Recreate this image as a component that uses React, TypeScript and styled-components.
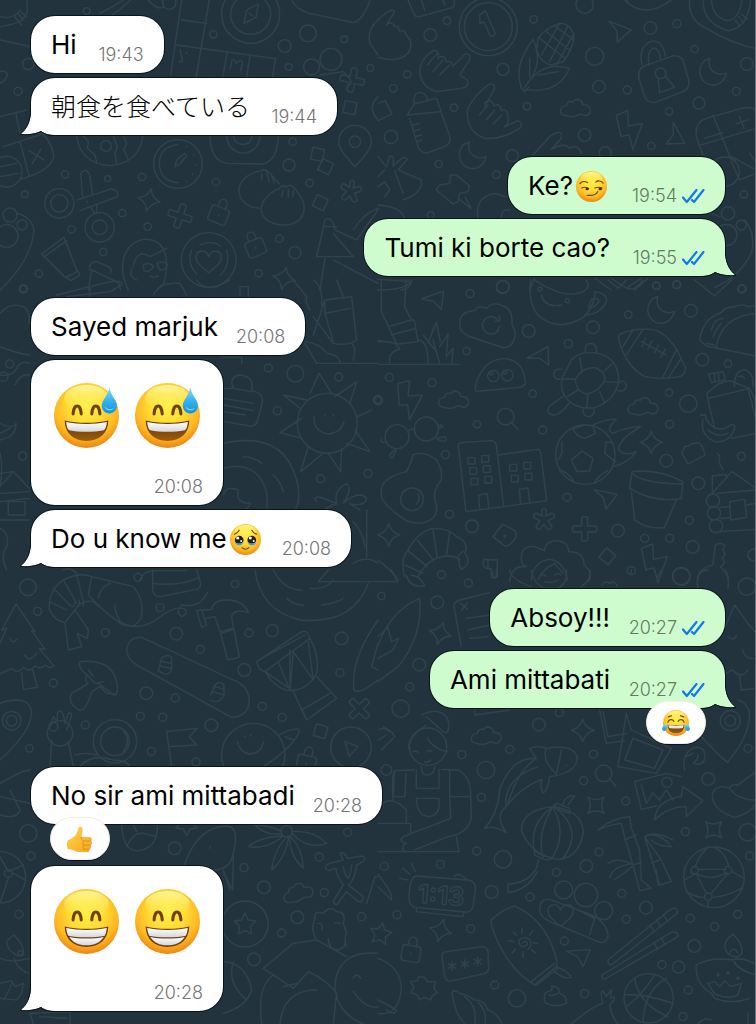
import React from 'react';
import styled, { createGlobalStyle } from 'styled-components';

const INK = '#0a141b';

const GlobalStyle = createGlobalStyle`
  *, *::before, *::after { box-sizing: border-box; }
  body {
    margin: 0;
    background: #22333d;
    color: #000;
    font-family: Inter, "Noto Sans CJK JP", sans-serif;
  }
`;

const Page = styled.main`
  position: relative;
  min-height: 100vh;
  padding: 16px 30px 13px 31px;
  border-right: 1px solid #66757f;
`;

const WallpaperSvg = styled.svg`
  position: absolute;
  inset: 0;
  width: 100%;
  height: 100%;
`;

const Thread = styled.div`
  position: relative;
  display: flex;
  flex-direction: column;
  gap: 22px;
`;

const Group = styled.ol<{ $own?: boolean }>`
  display: flex;
  flex-direction: column;
  align-items: ${(p) => (p.$own ? 'flex-end' : 'flex-start')};
  gap: 5px;
  margin: 0;
  padding: 0;
  list-style: none;
`;

const Bubble = styled.li<{ $own?: boolean; $reacted?: boolean }>`
  position: relative;
  isolation: isolate;
  display: flex;
  align-items: center;
  gap: 18px;
  min-height: 57px;
  padding: 1px 20px 0;
  margin-bottom: ${(p) => (p.$reacted ? 37 : 0)}px;
  border-radius: 24px;
  background: ${(p) => (p.$own ? '#cffccf' : '#fff')};
  box-shadow: 0 0 0 1px ${INK};
`;

const StickerBubble = styled(Bubble)`
  flex-direction: column;
  align-items: flex-end;
  justify-content: space-between;
  height: 145px;
  padding: 23px 20px 7px;
`;

const Text = styled.p`
  display: flex;
  align-items: center;
  margin: 0;
  font-size: 26px;
  line-height: 32px;
  white-space: nowrap;

  &:lang(ja) {
    font-size: 25px;
    font-weight: 300;
  }
`;

const Meta = styled.span`
  display: flex;
  align-items: center;
  gap: 5px;
  align-self: flex-end;
  padding-bottom: 7px;
`;

const StickerMeta = styled(Meta)`
  padding-bottom: 0;
`;

const Stamp = styled.time<{ $own?: boolean }>`
  min-width: 49px;
  font-size: 18px;
  line-height: 22px;
  font-weight: 300;
  text-align: right;
  color: ${(p) => (p.$own ? '#627b62' : '#757575')};
`;

const Stickers = styled.div`
  display: flex;
  gap: 16px;
  padding: 0 3px;
`;

const EmojiSvg = styled.svg<{ $size: number; $inline?: boolean }>`
  display: block;
  flex: none;
  width: ${(p) => p.$size}px;
  height: ${(p) => p.$size}px;
  margin: ${(p) => (p.$inline ? '0 3px' : '0')};
  overflow: visible;
`;

const TailSvg = styled.svg<{ $own?: boolean }>`
  position: absolute;
  z-index: -1;
  bottom: -1px;
  ${(p) => (p.$own ? 'right: -11px; transform: scaleX(-1);' : 'left: -11px;')}
  width: 36px;
  height: 34px;
`;

const Reaction = styled.button<{ $own?: boolean }>`
  position: absolute;
  top: 50px;
  ${(p) => (p.$own ? 'right: 19px;' : 'left: 19px;')}
  display: flex;
  align-items: center;
  justify-content: center;
  width: 60px;
  height: 43px;
  padding: 0;
  border: 1px solid #f1eee9;
  border-radius: 22px;
  background: #fff;
  box-shadow: 0 1px 0 ${INK};
`;

/* ---------- wallpaper ---------- */

const SHAPES = {
  sparkle: 'M0-34Q6-8 34 0Q8 6 0 34Q-6 8-34 0Q-8-6 0-34Z',
  cross: 'M-9-34Q0-40 9-34V-9H34Q40 0 34 9H9V34Q0 40-9 34V9H-34Q-40 0-34-9H-9Z',
  asterisk:
    'M-7-30Q0-38 7-30L5-12L24-20Q34-15 30-6L12 2L24 20Q21 31 11 28L0 13L-12 28Q-22 29-24 20L-12 2L-30-6Q-34-15-25-20L-5-12Z',
  lock: 'M-28-10Q-28-18-20-18H20Q28-18 28-10V22Q28 30 20 30H-20Q-28 30-28 22ZM-12-18V-32A12 12 0 0 1 12-32V-18M0 4V8',
  cloud:
    'M-30 22C-54 22-50-8-28-8C-26-22-14-22-10-18C0-34 22-26 20-10C50-14 50 20 28 22Q10 14 2 22Q-12 28-30 22Z',
  moon: 'M-8-40C-48-32-50 34 0 40C24 40 40 22 42 4C18 16-18-2-8-40Z',
  bolt: 'M-40-42L-6-56L-4-10L38-18L10 60L-2 16L-26 22Z',
  arrow: 'M-34-26L36-12L2 32L-6-2Z',
  square: 'M-18-18H18V18H-18Z',
  heart: 'M0 34C-24 14-38 4-38-12C-38-34-8-38 0-14C8-38 38-34 38-12C38 4 24 14 0 34Z',
  star: 'M0-32L10-12L32-9L16 8L20 30L0 19L-20 30L-16 8L-32-9L-10-12Z',
  lens: 'M25 0A25 25 0 1 1-25 0A25 25 0 1 1 25 0M18 18L36 38',
} as const;

type Mark = [keyof typeof SHAPES, number, number, number?];
type Region = {
  x: number;
  y: number;
  dots: [number, number, number][];
  marks: Mark[];
  lines: string[];
};

const REGIONS: Region[] = [
  {
    x: 0,
    y: 0,
    dots: [
      [260, 33, 10], [508, 8, 20], [640, 103, 11], [924, 100, 25], [854, 138, 19], [1033, 118, 10],
      [866, 201, 10], [935, 201, 24], [993, 178, 33], [1111, 204, 10], [54, 274, 12], [85, 192, 17],
      [195, 523, 11], [323, 536, 9], [426, 531, 11], [648, 546, 11], [867, 495, 18], [878, 425, 11],
      [929, 549, 11], [74, 583, 10], [367, 639, 11], [215, 688, 11], [443, 680, 11], [310, 756, 11],
      [838, 716, 11], [885, 758, 18], [776, 820, 11], [117, 821, 11], [70, 866, 10], [752, 43, 87],
      [752, 43, 60], [318, 438, 16], [534, 492, 73], [1065, 425, 17], [178, 610, 44], [178, 610, 26],
      [299, 682, 44], [299, 682, 22], [626, 780, 82], [30, 645, 21], [66, 675, 15], [20, 708, 34],
      [20, 515, 46],
    ],
    marks: [
      ['sparkle', 447, 600, 12], ['cross', 540, 648, 18], ['lock', 658, 640, 22], ['lock', 765, 738, -22],
      ['asterisk', 1052, 575, 10], ['square', 953, 463, 12], ['square', 977, 500, 25], ['square', 961, 608, 25],
      ['square', 1050, 323, 12], ['heart', 626, 784], ['sparkle', 852, 835, 12], ['cross', 1057, 240, 12],
    ],
    lines: [
      'M732 70L740 30L775 12L768 52ZM748 40L758 48',
      'M0 80Q80 70 82 30L80 0M0 50Q40 60 60 30M55 40L70 60M62 35L80 50M44 50L64 75',
      'M0 120L92 140M300 40Q340 20 370 0M330 50Q360 30 392 0M445 0Q470 30 490 22',
      'M545 0L512 225M628 0L588 235M545 60L620 70M530 135L826 176L818 234M750 165L740 234M682 155L668 234',
      'M540 150L548 180Q545 190 538 184M560 158V160',
      'M690 208L696 180Q706 176 708 190Q722 176 728 186L722 212',
      'M875 0Q890 30 930 40L1060 68Q1090 60 1110 0M1134 60Q1100 90 1110 130L1134 165',
      'M960 225L1030 215Q1070 250 1040 260M1134 290Q1100 320 1134 360',
      'M0 215Q20 210 22 225Q15 245 0 250',
      'M230 408Q240 490 330 497Q420 488 428 408M250 408L265 425L262 445L285 465L290 490M340 408L352 440L345 460L350 492M370 408L380 430L372 450L385 480',
      'M525 500L530 480L555 460L560 466L540 492ZM534 434Q478 440 478 492Q482 545 534 548M560 438V440M582 464V466M588 494V496M578 522V524M560 544V546',
      'M630 410Q632 480 680 490L790 492Q832 480 835 410M680 410Q685 455 730 460Q775 455 780 410M700 410Q705 432 730 434Q752 432 756 410',
      'M1065 500C1030 460 1016 446 1016 425A49 49 0 0 1 1114 425C1114 446 1096 466 1065 500Z',
      'M0 350L80 330M48 340L60 400L158 400M10 440L130 402Q160 440 162 470Q150 515 60 538M60 425L88 530M88 452L132 480M122 448L96 492M0 500L50 490M0 530L55 520',
      'M248 590L242 522Q255 500 268 522L278 582M232 600L335 567Q358 570 352 590L240 632M262 604V606M272 622L285 640M290 615V640',
      'M778 625C700 620 690 530 785 512Q795 505 805 515L838 552M785 520V540M800 515L808 545M815 525L822 548M838 565Q848 550 858 562Q870 550 880 562C940 620 910 680 845 675C770 668 760 600 838 565M850 570L845 590M865 568V592M880 572L878 590',
      'M575 750Q560 790 590 822M680 750Q692 800 660 825M600 735Q640 720 660 738',
      'M385 870C350 800 370 730 430 718C500 715 510 780 492 850L470 870M400 800Q410 745 450 770L500 745M430 795Q450 785 460 800Q450 820 432 812ZM470 790Q490 782 502 792Q500 812 480 810ZM450 828Q460 835 475 828M395 805Q385 830 410 840',
      'M125 762L192 712L232 815L195 832ZM200 832L212 842L240 825L234 815M130 772L200 722',
      'M265 870L275 810L355 848L362 870M270 812Q265 785 290 785L325 800Q338 808 330 820',
      'M0 870Q95 780 102 690Q95 650 50 640',
      'M950 770L975 660Q990 650 1000 670L1005 690L1070 720L1134 630M950 770H1060L1000 700M970 680H1010M1000 780L1134 850M975 775L960 870M1060 690Q1090 640 1134 625',
    ],
  },
  {
    x: 378,
    y: 0,
    dots: [
      [331, 80, 87], [331, 80, 72], [157, 105, 19], [207, 62, 11], [467, 58, 11], [620, 14, 26], [817, 84, 19],
      [897, 71, 12], [650, 169, 27], [375, 208, 18], [88, 223, 11], [46, 265, 11], [663, 260, 19], [748, 270, 12],
      [228, 323, 11], [447, 319, 11], [950, 147, 11], [1107, 192, 19], [1075, 274, 12], [963, 309, 18], [873, 334, 11],
      [620, 405, 19], [820, 438, 11], [403, 467, 18], [682, 458, 18], [182, 492, 11], [355, 524, 11], [158, 645, 10],
      [1098, 583, 11], [848, 220, 16], [1050, 640, 20], [1090, 675, 15], [1045, 705, 32], [375, 860, 19],
      [835, 857, 11], [896, 854, 11], [1092, 866, 11], [1040, 515, 44], [39, 411, 20],
    ],
    marks: [
      ['arrow', 722, 95, 10], ['moon', 1003, 215], ['cloud', 594, 325], ['moon', 282, 466], ['bolt', 755, 388],
      ['arrow', 888, 410, 50],
    ],
    lines: [
      'M305 45L322 32L352 100Q348 112 336 106L318 66L306 70Z',
      'M90 0L108 42Q112 52 125 50L225 22Q232 15 228 0M130 0L140 30M195 0L200 15',
      'M0 60Q40 20 50 35L25 75Q40 60 50 80Q60 75 65 95Q80 85 85 105Q110 130 90 160Q60 190 0 172',
      'M125 215Q125 180 165 152Q185 148 180 175Q200 160 205 185Q220 180 225 198L262 162Q280 160 275 180L245 225L268 240Q275 262 250 265L175 275Q130 262 125 215M148 195L178 160M165 215L195 180M185 225L215 195',
      'M430 260Q405 200 465 118Q500 190 445 255M440 262Q490 180 575 205Q540 285 440 268M455 175V230M480 225L540 215M428 262L440 275L452 262',
      'M475 150L480 115Q500 85 545 70Q580 70 588 110Q585 150 555 185L520 195Q490 190 475 150M485 115L560 175M505 95L575 150M530 78L588 120M545 70L490 165M570 78L515 185M588 100L535 195',
      'M268 330Q285 290 330 255Q350 245 350 265L320 320M318 310Q340 290 348 318Q365 305 370 332Q390 325 390 350Q395 370 380 380L420 362Q438 370 425 385Q370 420 320 415Q265 395 268 330M305 345L330 315M325 360L350 330M345 372L372 345',
      'M783 235Q778 205 800 198L885 168Q905 165 915 180L932 240Q936 265 915 275L830 308Q808 308 800 290ZM792 195Q780 140 820 124Q855 118 862 170M812 190Q808 152 825 145Q842 142 848 175M840 234L845 278L890 262L862 228',
      'M935 0Q930 60 985 85Q1060 130 1134 146M975 0Q975 70 1050 92Q1110 85 1118 0M1000 0Q1005 55 1050 62Q1085 55 1092 0M1072 60L1085 78M1082 50L1098 68M1090 42L1108 58',
      'M740 0Q800 60 880 0M748 0V2',
      'M88 345L108 312L175 295L190 335ZM108 310Q105 280 122 278Q145 275 148 300M95 355L120 440Q130 462 150 458L200 440Q220 430 216 410L190 340M105 375L125 370M110 392L125 388M112 410L130 405M118 425L132 420',
      'M0 310L22 302L42 342L0 362',
      'M955 410Q950 365 985 355L1090 325Q1120 318 1134 330M955 410L975 465M1005 345L1060 480M980 415L1035 398M1075 372L1110 360M1085 350L1098 385M970 435L1134 385M1060 470L1134 510M1115 460L1134 485M1060 485L1085 540L1134 520',
      'M465 465L520 405Q555 385 550 415L520 448Q560 425 575 445Q600 430 610 460',
      'M175 570L185 555L215 550L218 525L235 525L275 558L270 575L245 580L240 605L225 612ZM240 595L278 625M262 592L278 622',
      'M0 470L25 500L35 470Q50 460 45 500Q80 460 88 478L60 510L130 540Q135 570 100 590L75 600M20 510L0 530M50 512L75 580M0 560L20 545L35 570L20 590M0 615Q70 620 80 655',
      'M300 655Q290 590 350 580L380 590Q440 590 450 640M370 655Q370 625 395 630M1100 660Q1134 700 1120 760Q1085 830 1010 862M1000 640L1025 650',
      'M0 838L100 845Q95 868 70 870M455 870L470 835M700 835L745 865L790 835M650 835L700 870M770 870L810 835',
    ],
  },
  {
    x: 0,
    y: 280,
    dots: [
      [70, 27, 12], [29, 252, 12], [805, 264, 12], [886, 281, 25], [1016, 291, 12], [832, 392, 12], [68, 528, 12],
      [962, 596, 12], [1104, 580, 12], [982, 430, 90], [1134, 360, 10], [10, 290, 14],
    ],
    marks: [],
    lines: [
      'M958 280L930 340M958 280L995 340M1070 305L1005 350M1070 305L1050 370M850 345L920 360M850 345L900 385M840 458L905 415M840 458L905 475M902 575L925 500M902 575L970 520M1022 575L1025 505M1022 575L985 520M1110 515L1065 450M1110 515L1040 490M1115 390L1072 410',
      'M942 410Q940 455 985 462Q1025 458 1032 425M975 405V407M1000 405V407',
      'M670 325H700Q685 290 720 285Q765 290 755 330L780 342Q792 355 785 375L772 425Q765 440 750 438L675 425M670 355L760 370M672 375L760 392M672 395L735 405M700 325L755 335',
      'M670 490Q850 450 890 600Q905 660 885 690M670 565Q760 540 795 620Q805 655 800 685M730 530Q760 530 785 550M820 585Q842 605 850 635M670 645Q680 615 715 630Q705 670 752 670Q745 685 730 690',
      'M950 665Q935 645 970 655L1010 670Q1000 630 1040 612Q1060 625 1030 668Q1080 630 1100 655Q1095 680 1050 672L1080 690M975 690Q990 675 1010 672',
      'M170 45L330 5Q370 0 365 15L330 35L200 50M270 20V50M460 45Q480 5 540 10L560 45M720 45V20H745V50M590 0Q610 30 650 20L690 0',
      'M915 190L950 250H1134M940 165L975 60L1055 50L1070 180Q1040 200 1000 190L940 110M975 70V100L1050 85M975 100L1000 185M940 0Q970 20 965 80M1010 0L1030 50M1055 190Q1070 205 1060 240M880 0L920 50Q915 70 930 90M915 185Q960 190 980 220Q1020 225 1020 250M670 232H725V250',
      'M0 100Q30 65 70 80Q90 90 88 130M0 200Q50 220 90 225M0 285Q40 290 50 265Q60 240 88 250M45 315Q60 280 88 285M0 430Q40 450 48 430Q50 470 0 480M0 460L30 445M0 520Q10 560 0 620M0 580L40 575L88 625M40 575L0 620M25 665H75V705H25ZM0 665L88 655M0 720H88M0 640L88 635',
      'M1100 690V830M1060 725Q1090 760 1095 800M0 745Q30 760 20 800Q0 830 20 870M190 870Q210 860 230 880M420 900Q430 870 470 872H560M1060 850Q1100 825 1134 850',
    ],
  },
  {
    x: 378,
    y: 280,
    dots: [
      [276, 41, 12], [374, 21, 19], [452, 153, 19], [645, 142, 19], [835, 18, 11], [896, 14, 12], [1092, 27, 12],
      [751, 104, 11], [939, 92, 19], [266, 213, 11], [571, 191, 12], [973, 239, 19], [1050, 251, 11], [34, 292, 12],
      [162, 308, 12], [464, 341, 11], [0, 360, 14], [873, 338, 11], [931, 371, 26], [297, 433, 11], [494, 450, 12],
      [875, 433, 12], [202, 524, 12], [1090, 529, 12], [865, 542, 19], [961, 610, 19], [567, 652, 12], [214, 703, 12],
      [282, 739, 19], [934, 721, 12], [720, 752, 19], [800, 775, 12], [875, 775, 12], [944, 801, 19], [760, 872, 12],
      [190, 884, 12], [1128, 825, 18], [910, 888, 26], [346, 288, 17], [388, 286, 17], [340, 280, 5], [382, 278, 5],
      [57, 470, 36], [145, 447, 36], [622, 524, 89], [102, 658, 34], [486, 27, 6], [568, 62, 6], [1005, 662, 20],
      [1008, 700, 20], [1014, 738, 20], [381, 768, 3],
    ],
    marks: [
      ['arrow', 172, 62, -30], ['moon', 847, 90], ['arrow', 490, 232, -40], ['bolt', 93, 358, 8], ['cloud', 228, 360],
      ['cloud', 796, 380], ['lens', 383, 410], ['sparkle', 820, 487], ['sparkle', 32, 765], ['asterisk', 498, 720],
      ['cross', 620, 747], ['arrow', 682, 655], ['square', 688, 829, 40], ['bolt', 830, 848],
    ],
    lines: [
      'M245 130Q245 95 290 92Q300 75 325 85Q345 62 375 78Q405 85 402 135Q415 150 410 175Q400 205 375 203L275 170Q242 155 245 130M358 118Q345 105 328 112Q308 125 315 145Q325 168 352 160Q362 152 364 140M350 125L366 122L364 106',
      'M292 330Q290 300 320 262Q345 235 385 236Q440 245 442 312Q435 322 425 322L305 333Q294 335 292 330',
      'M458 0Q450 70 480 105Q540 160 620 110Q655 65 650 35M490 45Q500 85 552 75M470 0Q560 60 615 35Q640 20 625 0M650 35Q690 40 685 65Q665 105 620 105M640 58Q665 50 662 65Q650 85 632 85ZM690 0L720 25L745 0M750 25Q770 35 795 0M950 0L1010 48L1060 0',
      'M10 0V95L32 140L55 190L0 182M84 0L80 80L100 120L32 140M100 120Q112 115 113 145L40 165M113 145L120 185L60 192M120 180Q150 180 150 250M0 185Q55 180 65 208Q30 215 35 248M0 253H243M135 165L175 215M150 190L175 125L187 185M165 180L185 250M185 200L210 162L205 230L225 205L222 250M0 30Q90 30 102 0',
      'M552 295L580 240Q600 215 645 218Q720 225 722 300Q715 360 650 383Q600 390 570 360Q545 335 552 295M592 300Q610 262 650 263Q685 275 680 300Q665 335 625 342Q595 335 592 300M605 232L612 272M702 252L680 272M722 308L680 305M555 297H592M568 350L600 330M630 345L625 385M665 335L680 370M622 215Q620 190 640 190Q660 195 655 218M552 268Q525 265 527 285Q530 300 552 298M560 345L515 378Q500 400 525 405Q545 408 575 368M615 388Q615 412 635 410Q652 405 648 385M722 308Q745 295 745 320Q740 340 712 330',
      'M722 165Q760 145 820 148Q865 155 900 215L923 265Q920 285 905 290Q850 300 800 290Q745 260 722 180ZM765 150L735 200M795 148L745 225M895 210L855 290M910 235L872 292M790 185L865 225M802 175L792 200M822 182L810 208M842 195L830 218M862 208L848 232',
      'M965 180Q975 115 1030 98M965 180L985 198L1134 228M1015 200Q1030 110 1134 100M1030 98Q1040 80 1065 82Q1090 68 1110 80L1134 78M1000 150Q1010 115 1035 115M1005 170Q1020 140 1030 130M1010 195L985 190',
      'M10 478Q8 490 22 486M92 452Q100 445 110 447M180 440Q190 430 195 440L182 445M175 475L200 470Q210 480 198 485L178 478M50 508L35 525Q35 538 45 532L55 508',
      'M10 625Q20 590 85 575Q95 560 105 525Q140 510 175 540Q195 570 190 600Q165 630 170 660Q185 690 165 715Q130 740 85 722Q20 680 10 650ZM120 642Q128 660 115 672',
      'M241 500Q240 490 250 488L340 482Q352 482 355 495L377 680L264 695ZM360 525L478 508Q486 508 488 518L506 662L377 680M270 533H291V552H270ZM311 527H332V546H311ZM275 563H296V583H275ZM316 557H337V577H316ZM279 595H300V614H279ZM320 589H341V609H320ZM395 553H416V573H395ZM437 547H458V567H437ZM400 586H421V606H400ZM441 580H462V600H441ZM305 688L302 645L328 641L332 682M428 672L424 628L450 624L455 668',
      'M580 540L613 513L645 535L635 573L597 575ZM585 447L620 435M585 447Q595 470 622 475L652 460L645 440M540 540L552 520V485M545 570Q570 575 590 608M650 608Q660 585 690 572M712 545L680 520L685 485L705 490M640 437Q690 415 715 418Q680 450 705 460Q750 440 788 440Q720 480 722 510Q740 530 775 515Q750 550 710 558',
      'M990 360L987 340L1020 312L1055 302L1115 325L1130 355L1134 380M990 355L1115 325M990 360L1010 445M992 282L1035 275L1042 300L1000 308ZM1010 282V305M1022 280V303M1070 320Q1065 275 1100 268Q1130 280 1125 320M1080 290Q1095 285 1100 295M1110 325L1134 420M1060 475L1134 460M968 405H982L985 420Q1020 465 1058 435Q1072 430 1070 445Q1055 490 1010 485Q965 465 975 420M990 450Q1020 475 1050 460',
      'M912 520L920 500L932 498L938 492L962 488L972 498L982 525L930 552ZM1018 520Q1030 530 1022 545Q1030 560 1036 570',
      'M762 575Q840 565 915 605L910 655Q830 670 755 625ZM762 580Q790 610 912 612M760 635L770 720Q810 750 860 742L895 660',
      'M1003 640L1062 575L1134 625M1003 640V588L1045 583V592M1018 640L1134 630M1024 682L1052 680M1028 715L1055 714M1055 665L1100 658L1106 712L1058 720ZM1106 675L1134 670M1025 755L1134 748',
      'M345 770L375 732L410 752Q420 765 408 780Q395 800 380 798Z',
      'M80 890Q65 840 90 810Q120 755 165 745Q215 745 235 770Q275 785 260 820Q285 850 250 868Q240 850 245 838Q215 820 175 835Q140 850 120 890M80 855L135 880M90 812L148 860M118 780L170 845M165 748L178 835M215 758L205 828M255 812L240 830',
      'M318 838Q308 870 340 866L345 892H358V840ZM330 840V866M0 840Q40 870 60 900',
      'M430 835Q430 795 470 800L500 812Q500 785 535 782Q572 785 572 815Q618 815 618 855Q650 880 630 905M430 835Q430 855 445 860Q400 855 395 905M460 900Q465 845 515 838Q560 845 568 900M480 900Q490 870 530 850L555 880M485 888Q495 880 505 888M530 885Q540 877 548 885',
      'M960 900Q960 865 1005 855L1012 795Q1025 785 1040 795L1035 810L1042 822L1033 835L1040 848L1028 862Q1050 880 1050 900',
    ],
  },
  {
    x: 0,
    y: 570,
    dots: [
      [84, 52, 25], [113, 124, 12], [414, 22, 12], [705, 42, 11], [480, 113, 12], [316, 188, 12], [529, 191, 19],
      [817, 182, 18], [1025, 205, 19], [747, 189, 12], [601, 238, 12], [160, 339, 12], [733, 300, 19], [1020, 308, 12],
      [439, 370, 19], [526, 384, 12], [787, 409, 12], [847, 442, 12], [421, 439, 12], [488, 442, 12], [634, 466, 19],
      [256, 465, 12], [88, 535, 11], [454, 544, 12], [588, 576, 12], [35, 452, 28], [35, 452, 16], [345, 514, 65],
      [345, 514, 43], [1053, 532, 61], [760, 555, 95], [85, 790, 26], [93, 858, 12], [524, 835, 19], [732, 893, 12],
      [792, 952, 19], [958, 861, 12], [1043, 787, 12], [973, 968, 12], [892, 1042, 19], [845, 1089, 12], [57, 1033, 12],
      [1085, 1040, 12], [762, 1168, 19], [735, 1062, 69], [0, 922, 77], [25, 910, 12], [62, 1150, 8], [860, 784, 17],
      [180, 490, 38], [160, 470, 13],
    ],
    marks: [
      ['cross', 1078, 416, 45], ['square', 962, 484, 15], ['cloud', 895, 968, -15], ['star', 735, 1062], ['lock', 920, 575, 12],
      ['star', 560, 765, 180],
    ],
    lines: [
      'M48 102L5 180M48 102L105 185L95 182M5 180L20 175L0 220M95 182L135 238L118 236M118 236L162 288Q150 298 135 285Q125 300 105 288Q90 310 70 292Q50 315 35 295L0 312M30 205Q38 225 50 208M75 255Q85 280 110 250M65 308L70 358L112 352L98 300',
      'M148 120Q145 60 190 30Q240 5 275 20L400 50Q440 100 420 150Q400 180 360 160L280 95Q240 90 225 120M160 55L215 110M190 30L230 100M230 15L250 95M148 95L200 120M150 120Q160 150 195 158L225 120L265 180L262 205L232 190L245 230L205 240L195 158M275 20L265 75L300 110M225 95L220 110M238 92L236 110M250 92L250 108M330 40Q300 50 295 85M345 105V120L360 155',
      'M360 155Q420 190 480 140Q520 110 550 115Q570 130 545 140Q525 125 545 105Q600 115 622 68',
      'M458 0V60Q460 80 480 80L590 58Q602 55 602 40L590 0M458 40Q540 50 598 22',
      'M590 122L605 120L620 165L605 172ZM605 120L635 118Q640 90 680 90Q730 90 745 128Q700 115 695 140L700 175L660 185L645 140L618 145M662 190L702 178L718 262L683 270Z',
      'M380 240Q385 200 425 202L700 330Q750 350 748 400Q740 440 695 442L410 285Q380 265 380 240M475 300L485 265Q500 250 515 262V300Q500 325 475 300M485 275L515 280M480 288L512 295M632 375L645 345Q660 330 672 345V375Q655 405 632 390M645 350L672 358M638 365L670 375',
      'M770 275L905 185Q925 180 930 205L795 305Q775 300 770 275M785 265L915 195M795 305Q830 360 870 362Q925 360 950 310Q960 260 930 205M795 305L868 355M835 275L870 360L880 245L940 330L925 215M870 240V340M880 365L920 450L1010 385L950 320M905 420L990 370',
      'M240 275Q340 265 352 345Q355 375 340 375L295 340M240 275Q230 290 262 315Q250 330 265 340L215 370Q200 400 240 422Q260 420 275 365L300 350L320 370L350 372M262 315L285 340L310 335M265 300L280 318',
      'M1134 150Q1050 270 1062 360Q1080 375 1134 330M1134 220L1115 290L1134 300',
      'M765 0Q780 120 900 150Q1060 165 1105 40M820 0Q850 60 905 60M1000 30Q980 60 930 55M955 35H1134M955 35L985 0M860 85Q880 105 910 105M965 105Q1010 100 1030 85',
      'M0 400Q90 370 95 430Q90 490 0 570',
      'M500 485L592 475L568 500L590 525L510 530M500 485L515 590',
      'M150 470L160 440L172 455L172 430Q182 415 190 435L195 460L205 430Q220 425 212 445L200 480M155 510L150 590M205 515L220 590M225 555Q260 545 290 555M240 590Q270 550 340 570Q380 570 390 590M370 485Q395 510 370 545',
      'M712 515Q720 550 750 552Q785 550 790 515M735 498V500M752 495V497M835 495Q900 465 898 485Q880 530 790 590M855 500L880 510',
      'M1035 515L1075 530L1048 558Z',
      'M0 640L65 605L90 600M0 680L90 700M0 735Q50 750 60 720L30 660',
      'M365 765Q370 850 420 842Q475 830 472 765M380 830Q400 785 430 790L470 800M400 765L410 785',
      'M552 890Q590 770 680 768Q720 770 700 850Q690 900 640 900Q600 895 590 920M670 900L690 960M700 860L698 960L672 910M630 830V835',
      'M845 785Q810 765 765 765Q800 800 845 790M850 798Q780 800 745 830Q800 840 850 798M860 800Q820 845 815 900Q860 860 865 800M868 800Q870 860 910 895Q910 840 872 800M875 790Q920 840 980 820Q940 780 875 785',
      'M980 900Q970 885 990 880L1030 870L1020 850Q1035 845 1042 865L1085 858Q1102 865 1090 875L1070 885Q1065 930 1045 945L1090 980Q1090 1000 1075 995L1040 965L1010 1005Q995 1000 1005 985L1030 945Q1010 920 1008 895L985 902M1030 890Q1035 920 1045 925Q1055 905 1055 885M1100 1000L1125 920H1134',
      'M0 860L25 905L70 885M25 925L0 1000M40 910L77 930M20 1120Q20 1110 42 1095Q75 1130 70 1150Q55 1165 42 1150Q25 1140 20 1120M0 1165Q30 1180 88 1165M42 1165Q50 1195 85 1210M0 1240L35 1232L45 1250L70 1240L65 1270L50 1290L0 1285M10 1290Q30 1260 35 1240',
      'M670 1175Q740 1180 755 1260Q740 1310 670 1330M700 1175Q680 1240 740 1290M90 1330L100 1362M90 1330L210 1325V1362M120 1340L200 1345',
      'M790 1195L880 1120L950 1110Q930 1080 945 1045Q940 1020 970 1030Q990 1005 1010 1025Q1040 1025 1030 1060L1040 1090Q1030 1110 1040 1130M985 1105Q985 1140 1015 1140Q1040 1130 1035 1110M965 1080Q970 1060 955 1060M1005 1060Q1015 1055 1020 1062M790 1195L880 1255L925 1205M850 1250L890 1240M950 1110L1040 1160M925 1205Q980 1230 1010 1270L1000 1362M785 1362Q770 1250 820 1215M1134 1150Q1010 1140 1005 1250Q1010 1330 1090 1362M1060 1225Q1070 1205 1082 1225M1060 1265Q1100 1320 1134 1310M840 1362Q850 1260 950 1260',
    ],
  },
  {
    x: 378,
    y: 570,
    dots: [
      [10, 78, 11], [271, 39, 12], [178, 97, 19], [910, 20, 26], [1107, 50, 26], [124, 284, 19], [95, 351, 12],
      [68, 416, 26], [483, 464, 19], [544, 428, 12], [395, 538, 12], [251, 554, 12], [324, 600, 26], [646, 553, 12],
      [1057, 452, 30], [1057, 452, 16], [1110, 535, 12], [617, 632, 12], [991, 627, 19], [310, 682, 12], [743, 693, 12],
      [867, 637, 15], [922, 785, 12], [1109, 787, 26], [296, 843, 12], [663, 846, 12], [375, 868, 26], [625, 888, 19],
      [535, 907, 12], [187, 883, 12], [19, 889, 12], [1115, 858, 12], [341, 966, 19], [456, 981, 12], [731, 970, 12],
      [804, 1013, 19], [745, 1048, 12], [937, 1045, 12], [1079, 1033, 12], [1010, 1070, 12], [57, 1034, 12],
      [278, 1076, 12], [559, 1113, 12], [949, 1128, 19], [852, 1184, 12], [902, 1191, 18], [350, 1245, 12],
      [417, 1285, 26], [620, 1271, 12], [931, 1260, 12], [915, 1340, 12], [150, 530, 56], [1008, 922, 91],
      [1050, 901, 11], [950, 901, 11], [991, 980, 11], [812, 1285, 74], [557, 960, 27], [624, 975, 35], [677, 1022, 27],
      [25, 600, 16], [1020, 1215, 3], [1050, 1208, 3], [1080, 1225, 3],
    ],
    marks: [
      ['sparkle', 187, 190, 15], ['sparkle', 614, 481], ['cloud', 326, 498], ['lens', 677, 610], ['sparkle', 654, 706, 45],
      ['sparkle', 1007, 779, 45], ['sparkle', 188, 1082, 15], ['lock', 100, 1145, 10], ['arrow', 605, 1160, -15],
      ['heart', 548, 1035], ['star', 8, 1090, 10],
    ],
    lines: [
      'M222 1175V1201M211 1181L233 1195M233 1181L211 1195M261 1169V1195M250 1175L272 1189M272 1175L250 1189M299 1162V1188M288 1168L310 1182M310 1168L288 1182',
      'M0 225Q40 120 125 85Q135 200 60 290L0 335M0 200L30 172L40 215L62 205L45 240L0 265M0 35H60L40 0M85 15Q95 55 140 48Q130 20 100 15M340 0V20Q348 30 355 18V0',
      'M228 110Q228 95 245 90L335 68M228 110L250 230M248 100L268 118M268 98L250 122M265 145L335 135M270 180L335 165M275 205L330 200M290 420V435L395 420',
      'M395 0Q400 30 460 50M460 0Q465 40 500 55H540Q570 40 565 0M635 0Q640 30 610 50M500 35Q520 42 540 30M672 45Q680 30 695 40Q710 30 718 48M760 0V10M830 0L838 25L850 0M960 55Q950 0 990 0M1050 55Q1055 10 1040 0M1040 175L1070 105L1110 160L1134 190M1050 200Q1070 215 1075 195M1095 240Q1100 270 1134 265M1045 310Q1060 300 1065 300Q1090 330 1110 300M1085 320L1090 360L1134 355',
      'M92 535Q90 500 145 465M148 505Q170 540 210 545M130 435Q160 420 180 425Q215 435 212 470Q210 500 190 480L145 440M105 545Q115 540 122 547M148 545Q155 538 162 545M140 575Q150 580 158 570M130 590Q130 615 148 615Q170 612 170 590M108 600L50 602Q40 610 45 680H80L85 610M50 602L45 690M115 600V655H183V598M190 598L240 600Q280 620 278 680H215V600M278 680L280 740Q275 790 210 800L110 840M215 680L218 745L75 800Q60 815 85 820Q65 830 80 845M115 685H183V715Q175 740 150 740Q115 735 115 685M0 710Q40 670 85 720V760M0 760H98V790M0 845H243L235 800',
      'M0 480Q30 465 50 500L10 540M0 510L25 495M35 485L15 470',
      'M320 775Q360 730 365 660Q400 560 475 565L455 535Q480 525 505 535Q590 520 598 565Q595 610 515 620Q510 660 495 670Q485 650 492 628Q430 650 380 715Q350 740 385 788Q350 765 320 775M505 535Q490 570 535 612Q545 570 550 540M475 565Q420 600 390 700Q380 715 385 680Q395 620 480 590M565 585V587',
      'M430 780Q432 720 525 710Q610 720 616 785Q605 860 545 868Q460 860 430 780M525 710Q450 760 470 850M525 710Q475 790 495 862M525 712Q570 790 520 868M530 712Q620 780 555 865M528 705Q540 720 575 730L575 715L535 700ZM555 705Q560 675 590 678L570 705M470 840Q490 860 520 862Q515 880 470 855ZM482 870L475 895Q450 940 390 942V968Q450 960 478 905',
      'M660 780Q700 745 755 740L760 775L785 840L790 930L820 955L785 962L765 885L740 800L730 760Q690 765 660 780M740 810L775 795M765 885L790 878M695 925Q700 890 765 880M690 880Q720 860 760 882M710 928Q740 910 762 890M800 800L850 870L880 935L845 945L825 880L800 800Q830 780 885 810M810 795Q850 790 880 830Q840 830 820 810M820 880L845 870M840 945L835 900',
      'M665 420L685 520L740 512M675 425L690 500L745 490M745 430L760 480L880 535L835 610L720 590ZM765 505L855 540L830 595L740 570ZM770 635L865 610L910 620M770 635L790 718L835 708M790 645L805 700L825 668L845 690L865 660L885 690M830 750Q835 690 910 680L915 650L975 692L925 740V710Q870 710 830 750',
      'M970 500Q1050 585 1050 575Q1115 500 1115 430Q1110 400 1080 390M920 600Q910 550 950 532Q985 530 980 565Q975 590 945 580Q960 570 960 555M925 560L945 550',
      'M1003 670Q1020 640 1055 655Q1060 640 1080 645L1134 605M1003 670Q1000 720 1070 742Q1120 730 1134 700M1055 655Q1080 690 1134 690',
      'M920 930L950 912M962 898L1045 898M1062 905L1098 925M955 912L985 970M1048 912L1000 970M952 890Q960 860 990 832M1010 832Q1045 850 1052 890M955 910Q1000 935 1045 908M925 965Q960 985 980 982M1003 982Q1050 980 1090 955M990 992V1012',
      'M93 980Q95 920 115 918L270 930Q295 935 292 960L285 1010Q280 1028 262 1026L110 1012Q92 1005 93 980M228 920Q240 905 262 925M115 1015V1025L255 1040L258 1028M65 925L90 930M75 895L95 912M100 880L112 905',
      'M340 1050Q370 1020 410 1008Q500 1050 530 1150Q540 1180 535 1190L470 1245Q380 1190 340 1065ZM460 1235L530 1180M475 1245L540 1195M535 1190Q580 1210 578 1222Q560 1230 530 1205M435 1118Q440 1110 448 1118Q448 1130 432 1130Q418 1120 425 1108Q440 1098 455 1108Q465 1125 450 1138M432 1090V1075M455 1095L465 1082M465 1118L480 1120M460 1138L472 1150M435 1145V1162M412 1138L402 1150M408 1115L392 1112M415 1095L405 1085',
      'M485 1020Q485 980 520 990L640 1035Q690 1060 690 1100Q680 1125 660 1115L540 1065Q485 1045 485 1020M650 1045L635 1095M600 1020L650 1045',
      'M690 1170L875 1020Q900 1005 898 1030L700 1185Q688 1185 690 1170M672 1215L875 1090Q900 1080 900 1100L680 1228Q670 1228 672 1215M855 1035L870 1055M835 1050L850 1070M815 1065L830 1085M850 1105L862 1125M828 1120L840 1138',
      'M740 1275Q800 1270 885 1300M770 1225Q780 1300 870 1340M865 1225Q800 1260 795 1355M745 1310Q790 1280 830 1215',
      'M1040 1130Q1040 1110 1065 1093Q1095 1120 1092 1150Q1080 1165 1068 1160Q1045 1155 1040 1130M1055 1150Q1065 1125 1080 1150M955 1185Q1000 1160 1060 1170Q1100 1160 1134 1185M955 1185Q950 1240 1000 1270L1010 1285Q1060 1305 1115 1285M1068 1175Q1080 1200 1134 1215M990 1240L1010 1235L1025 1250L1040 1232L1058 1250L1090 1240L1080 1275Q1050 1290 1010 1272Z',
      'M192 1160Q190 1148 205 1145L315 1130Q328 1132 330 1145L332 1195Q330 1210 315 1212L220 1233Q205 1235 200 1220Z',
      'M98 1235L118 1232L122 1220L140 1222L148 1235L172 1235L168 1255L178 1268L162 1278L158 1290L138 1282L125 1290L118 1275L98 1268L108 1252Z',
      'M222 1270Q225 1255 245 1270Q270 1275 290 1290Q320 1290 330 1320Q360 1330 370 1360M222 1270Q230 1330 260 1362M260 1280Q300 1310 290 1362M300 1295Q330 1330 320 1362',
      'M500 1285Q495 1265 520 1262Q525 1250 520 1248Q545 1250 545 1270Q570 1280 565 1300Q540 1315 505 1300Q495 1290 500 1285M512 1275Q525 1280 540 1270',
      'M580 1362Q640 1310 675 1300Q665 1265 675 1262L685 1280L700 1260L698 1285Q715 1275 708 1290L695 1305Q700 1340 720 1362M960 1362Q980 1340 1000 1350M0 1165Q70 1190 70 1260Q60 1340 0 1330M0 1290Q30 1305 55 1320Q50 1340 25 1320M1110 1330V1362M0 950L40 990Q45 975 20 940L0 912',
    ],
  },
];

const Wallpaper = () => (
  <WallpaperSvg aria-hidden="true">
    <defs>
      <pattern id="doodles" width="756" height="1024" patternUnits="userSpaceOnUse">
        <g fill="none" stroke="#30434d" strokeLinecap="round" strokeLinejoin="round" strokeWidth="4">
          {REGIONS.map((r) => (
            <g key={`${r.x}-${r.y}`} transform={`translate(${r.x} ${r.y}) scale(0.3333)`}>
              {r.dots.map(([cx, cy, radius], i) => (
                <circle key={i} cx={cx} cy={cy} r={radius} />
              ))}
              {r.marks.map(([name, x, y, turn = 0], i) => (
                <path key={i} d={SHAPES[name]} transform={`translate(${x} ${y}) rotate(${turn})`} />
              ))}
              {r.lines.map((d, i) => (
                <path key={i} d={d} />
              ))}
            </g>
          ))}
          <g transform="translate(378 570) scale(0.3333)" fontFamily="Inter, sans-serif" fontWeight="700">
            <text x="118" y="998" fontSize="76" transform="rotate(4 118 998)">1:13</text>
          </g>
        </g>
      </pattern>
    </defs>
    <rect width="100%" height="100%" fill="url(#doodles)" />
  </WallpaperSvg>
);

/* ---------- emoji ---------- */

const HiddenSvg = styled.svg`
  position: absolute;
  width: 0;
  height: 0;
`;

const EmojiDefs = () => (
  <HiddenSvg aria-hidden="true">
    <defs>
      <radialGradient id="skin" cx="0.5" cy="0.36" r="0.66">
        <stop offset="0" stopColor="#fff04a" />
        <stop offset="0.4" stopColor="#ffdd33" />
        <stop offset="0.74" stopColor="#fdb824" />
        <stop offset="1" stopColor="#e97f10" />
      </radialGradient>
      <linearGradient id="shine" x1="0" y1="0" x2="0" y2="1">
        <stop offset="0" stopColor="#fff9a8" stopOpacity="0.9" />
        <stop offset="1" stopColor="#fff04a" stopOpacity="0" />
      </linearGradient>
      <linearGradient id="mouth" x1="0" y1="0" x2="0" y2="1">
        <stop offset="0" stopColor="#633006" />
        <stop offset="1" stopColor="#9a5f0c" />
      </linearGradient>
      <linearGradient id="teeth" x1="0" y1="0" x2="0" y2="1">
        <stop offset="0" stopColor="#ffffff" />
        <stop offset="1" stopColor="#d5d7dc" />
      </linearGradient>
      <linearGradient id="water" x1="0" y1="0" x2="0" y2="1">
        <stop offset="0" stopColor="#9adcf8" />
        <stop offset="0.5" stopColor="#35b4f0" />
        <stop offset="1" stopColor="#1493dd" />
      </linearGradient>
      <linearGradient id="hand" x1="0" y1="0" x2="1" y2="1">
        <stop offset="0" stopColor="#ffd84a" />
        <stop offset="1" stopColor="#f5a623" />
      </linearGradient>
    </defs>
  </HiddenSvg>
);

type EmojiName = 'sweat' | 'beam' | 'smirk' | 'plead' | 'joy' | 'thumb';

const LABELS: Record<EmojiName, string> = {
  sweat: '😅',
  beam: '😁',
  smirk: '😏',
  plead: '🥹',
  joy: '😂',
  thumb: '👍',
};

const Face = () => (
  <>
    <circle r="32" fill="url(#skin)" />
    <ellipse cy="-17" rx="22" ry="13" fill="url(#shine)" />
  </>
);

const SmilingEyes = () => (
  <g fill="none" stroke="#70400a" strokeWidth="3" strokeLinecap="round">
    <path d="M-13.2-1.6C-12.6-12-5.8-12-5.2-1.6" />
    <path d="M5.2-1.6C5.8-12 12.6-12 13.2-1.6" />
  </g>
);

const ART: Record<EmojiName, React.ReactNode> = {
  sweat: (
    <>
      <Face />
      <SmilingEyes />
      <path d="M-21.5 5C-10 8 10 8 21.5 5C21 18 13 25 0 25S-21 18-21.5 5Z" fill="url(#mouth)" />
      <path d="M-20 6.5C-8 9 8 9 20 6.5C19.5 12 18.5 13.5 17 14.5C7 16.5-7 16.5-17 14.5C-18.5 13.5-19.5 12-20 6.5Z" fill="url(#teeth)" />
      <path d="M22.5-28C24-19 30-15 30-9.5C30-5 26.5-2 22.5-2S15-5 15-9.5C15-15 21-19 22.5-28Z" fill="url(#water)" />
      <path d="M18-9C18.5-4.5 25-3.5 27-8C25-5.500 20-5.500 18-9Z" fill="#8fe3ff" />
    </>
  ),
  beam: (
    <>
      <Face />
      <SmilingEyes />
      <path d="M-21.5 5C-10 8 10 8 21.5 5C21 18 13 25 0 25S-21 18-21.5 5Z" fill="#70400a" />
      <path d="M-20 6.5C-8 9 8 9 20 6.5C19.5 10 19 12 18 14C8 16-8 16-18 14C-19 12-19.5 10-20 6.5Z" fill="url(#teeth)" />
      <path d="M-17 15.3C-8 17.3 8 17.3 17 15.3C13 21 8 23.5 0 23.5S-13 21-17 15.3Z" fill="url(#teeth)" />
    </>
  ),
  smirk: (
    <>
      <Face />
      <g fill="none" stroke="#70400a" strokeWidth="2.4" strokeLinecap="round">
        <path d="M-24-6C-20-11-13-11-8-8" />
        <path d="M9-9C13-13 20-12 24-7" />
        <path d="M-20 3C-16 1-11 1-6 4" />
        <path d="M7 3C11 1 16 1 22 3" />
        <path d="M-9 18C0 19 10 18 13 10" />
      </g>
      <ellipse cx="-9" cy="5" rx="3.5" ry="2.5" fill="#4a2704" />
      <ellipse cx="18" cy="5" rx="3.5" ry="2.5" fill="#4a2704" />
    </>
  ),
  plead: (
    <>
      <Face />
      <g fill="none" stroke="#70400a" strokeWidth="2.2" strokeLinecap="round">
        <path d="M-23-11C-19-12-15-15-13-19" />
        <path d="M23-11C19-12 15-15 13-19" />
        <path d="M-7 17C-3 21 3 21 7 17" />
      </g>
      <circle cx="-13" cy="1" r="9" fill="#2b1a12" />
      <circle cx="13" cy="1" r="9" fill="#2b1a12" />
      <path d="M-23 4C-18 9-10 9-4 5C-5 13-20 15-23 4Z" fill="url(#water)" />
      <path d="M23 4C18 9 10 9 4 5C5 13 20 15 23 4Z" fill="url(#water)" />
      <g fill="#fff">
        <circle cx="-16" cy="-3" r="3.2" />
        <circle cx="10" cy="-3" r="3.2" />
        <circle cx="-9" cy="3" r="2" />
        <circle cx="17" cy="3" r="2" />
      </g>
    </>
  ),
  joy: (
    <>
      <Face />
      <g fill="none" stroke="#70400a" strokeWidth="2.8" strokeLinecap="round">
        <path d="M-20-2C-17-10-9-10-5-4" />
        <path d="M5-4C9-10 17-10 20-2" />
        <path d="M-19-15L-11-18" />
        <path d="M19-15L11-18" />
      </g>
      <path d="M-21 4C-10 6 10 6 21 4C20 18 13 25 0 25S-20 18-21 4Z" fill="url(#mouth)" />
      <path d="M-19 5.5C-8 7 8 7 19 5.5L17 12C8 14-8 14-17 12Z" fill="url(#teeth)" />
      <path d="M-20 3C-31 4-37 11-33 18C-28 22-21 18-20 3Z" fill="url(#water)" />
      <path d="M20 3C31 4 37 11 33 18C28 22 21 18 20 3Z" fill="url(#water)" />
    </>
  ),
  thumb: (
    <>
      <path
        d="M-30 3C-23 1-12-5-6-18C-5-23-4-30 0-30C8-31 8-18 3-5H22C30-5 31 3 27 5C31 8 30 14 26 15C29 19 27 24 23 25C25 30 22 32 16 32H0C-12 32-15 25-30 25C-33 18-33 9-30 3Z"
        fill="url(#hand)"
      />
      <g fill="none" stroke="#d88a14" strokeWidth="2" strokeLinecap="round">
        <path d="M27 5H9" />
        <path d="M26 15H9" />
        <path d="M23 25H9" />
        <path d="M3-5C2 0 5 3 9 5C6 8 6 12 9 15C7 18 7 22 9 25" />
      </g>
    </>
  ),
};

const Emoji = ({ name, size, inline }: { name: EmojiName; size: number; inline?: boolean }) => (
  <EmojiSvg $size={size} $inline={inline} viewBox="-32 -32 64 64" role="img" aria-label={LABELS[name]}>
    {ART[name]}
  </EmojiSvg>
);

/* ---------- message parts ---------- */

const Ticks = () => (
  <svg width="23" height="16" viewBox="0 0 23 16" fill="none" stroke="#1577ef" strokeWidth="2.2" role="img" aria-label="Read">
    <path d="M1 9.5L4.8 14L14.5 2M10 12L12 14L21.5 2" strokeLinecap="round" strokeLinejoin="round" />
  </svg>
);

const Tail = ({ own }: { own?: boolean }) => (
  <TailSvg $own={own} viewBox="0 0 36 34" aria-hidden="true">
    <path
      d="M11 0V8C11 19 7 27 0 32.4C8 33 16 31.5 21 29C25 32 29 33 36 33V0Z"
      fill={own ? '#cffccf' : '#fff'}
    />
    <path
      d="M10.5 0V8C10.5 19 7 27 0 32.4C8 33.4 16 32 21 29.5C25 32.5 29 33.5 36 33.5"
      fill="none"
      stroke={INK}
    />
  </TailSvg>
);

type Message = {
  text?: string;
  lang?: string;
  emoji?: EmojiName;
  stickers?: EmojiName[];
  time: string;
  reaction?: EmojiName;
};

const CHAT: { own?: boolean; messages: Message[] }[] = [
  { messages: [{ text: 'Hi', time: '19:43' }, { text: '朝食を食べている', lang: 'ja', time: '19:44' }] },
  { own: true, messages: [{ text: 'Ke?', emoji: 'smirk', time: '19:54' }, { text: 'Tumi ki borte cao?', time: '19:55' }] },
  {
    messages: [
      { text: 'Sayed marjuk', time: '20:08' },
      { stickers: ['sweat', 'sweat'], time: '20:08' },
      { text: 'Do u know me', emoji: 'plead', time: '20:08' },
    ],
  },
  { own: true, messages: [{ text: 'Absoy!!!', time: '20:27' }, { text: 'Ami mittabati', time: '20:27', reaction: 'joy' }] },
  { messages: [{ text: 'No sir ami mittabadi', time: '20:28', reaction: 'thumb' }, { stickers: ['beam', 'beam'], time: '20:28' }] },
];

const MessageItem = ({ message, own, last }: { message: Message; own?: boolean; last: boolean }) => {
  const { text, lang, emoji, stickers, time, reaction } = message;
  if (stickers) {
    return (
      <StickerBubble $own={own}>
        {last && <Tail own={own} />}
        <Stickers>
          {stickers.map((name, i) => (
            <Emoji key={i} name={name} size={65} />
          ))}
        </Stickers>
        <StickerMeta>
          <Stamp $own={own}>{time}</Stamp>
        </StickerMeta>
      </StickerBubble>
    );
  }
  return (
    <Bubble $own={own} $reacted={Boolean(reaction)}>
      {last && <Tail own={own} />}
      <Text lang={lang}>
        {text}
        {emoji && <Emoji name={emoji} size={31} inline />}
      </Text>
      <Meta>
        <Stamp $own={own}>{time}</Stamp>
        {own && <Ticks />}
      </Meta>
      {reaction && (
        <Reaction type="button" $own={own} aria-label={`Reaction ${LABELS[reaction]}`}>
          <Emoji name={reaction} size={26} />
        </Reaction>
      )}
    </Bubble>
  );
};

export default function App() {
  return (
    <>
      <GlobalStyle />
      <EmojiDefs />
      <Page>
        <Wallpaper />
        <Thread>
          {CHAT.map((group, g) => (
            <Group key={g} $own={group.own}>
              {group.messages.map((message, m) => (
                <MessageItem key={m} message={message} own={group.own} last={m === group.messages.length - 1} />
              ))}
            </Group>
          ))}
        </Thread>
      </Page>
    </>
  );
}
